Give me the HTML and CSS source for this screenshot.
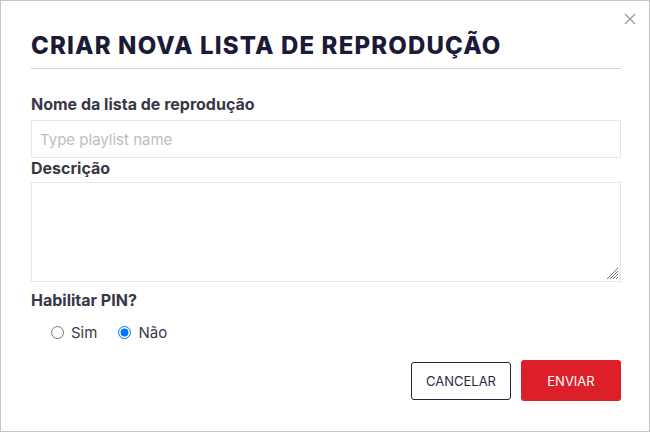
FILE: index.html
```html
<!DOCTYPE html>
<html>
<head>
<meta charset="utf-8">
<link rel="stylesheet" href="styles.css">
</head>
<body>
<div class="modal">
  <button class="close" aria-label="Fechar">
    <svg width="12" height="12" viewBox="0 0 12 12"><path d="M1 1L11 11M11 1L1 11" stroke="#9a9a9a" stroke-width="1.3" fill="none"/></svg>
  </button>
  <h1 class="title">CRIAR NOVA LISTA DE REPRODUÇÃO</h1>
  <div class="form">
    <label class="label" for="name">Nome da lista de reprodução</label>
    <input class="input" id="name" type="text" placeholder="Type playlist name">
    <label class="label label-desc" for="desc">Descrição</label>
    <div class="textarea-wrap">
      <textarea class="textarea" id="desc"></textarea>
      <svg class="grip" width="14" height="14" viewBox="0 0 14 14"><path d="M13 2L2 13M13 5L5 13M13 8L8 13M13 11L11 13" stroke="#7a7a7a" stroke-width="1" fill="none"/></svg>
    </div>
    <div class="label label-pin">Habilitar PIN?</div>
    <div class="radios">
      <label class="radio"><input type="radio" name="pin"> Sim</label>
      <label class="radio"><input type="radio" name="pin" checked> Não</label>
    </div>
    <div class="actions">
      <button class="btn btn-cancel">CANCELAR</button>
      <button class="btn btn-submit">ENVIAR</button>
    </div>
  </div>
</div>
</body>
</html>
```
FILE: styles.css
```css
html, body {
  margin: 0;
  padding: 0;
  background: #ffffff;
}
.modal {
  position: relative;
  width: 650px;
  height: 432px;
  box-sizing: border-box;
  border: 1px solid #c6c6c6;
  padding: 29px 28px 0 30px;
  font-family: Inter, "Liberation Sans", sans-serif;
  background: #fff;
}
.close {
  position: absolute;
  top: 12px;
  right: 13px;
  border: 0;
  background: none;
  padding: 0;
  width: 12px;
  height: 12px;
  display: flex;
}
.title {
  margin: 0;
  font-family: Inter, sans-serif;
  font-weight: 800;
  font-size: 24px;
  line-height: 32px;
  color: #1b1b38;
  letter-spacing: 1.15px;
  padding-bottom: 6px;
  border-bottom: 1px solid #d2d2d2;
}
.form {
  display: flex;
  flex-direction: column;
  padding-top: 25px;
}
.label {
  font-size: 16px;
  font-weight: 700;
  color: #383748;
  line-height: 20px;
  margin-bottom: 6px;
}
.input {
  box-sizing: border-box;
  height: 38px;
  border: 1px solid #e6e6e6;
  padding: 0 8px;
  font-family: Inter, sans-serif;
  font-size: 15px;
  outline: none;
  margin: 0;
}
.input::placeholder {
  color: #bdbdbd;
}
.label-desc {
  margin-top: 0;
  margin-bottom: 4px;
}
.textarea-wrap {
  position: relative;
  display: flex;
}
.textarea {
  flex: 1;
  box-sizing: border-box;
  height: 100px;
  border: 1px solid #e6e6e6;
  margin: 0;
  outline: none;
  resize: none;
}
.grip {
  position: absolute;
  right: 2px;
  bottom: 2px;
}
.label-pin {
  margin-top: 8px;
  margin-bottom: 0;
}
.radios {
  display: flex;
  gap: 21px;
  padding-left: 20px;
  margin-top: 13px;
}
.radio {
  display: flex;
  align-items: center;
  font-size: 15px;
  color: #3a3a4a;
  gap: 7px;
}
.radio input {
  margin: 0;
  width: 13px;
  height: 13px;
}
.actions {
  display: flex;
  justify-content: flex-end;
  align-items: center;
  gap: 10px;
  margin-top: 18px;
}
.btn {
  width: 100px;
  font-family: Inter, sans-serif;
  font-size: 13px;
  border-radius: 3px;
  cursor: pointer;
}
.btn-cancel {
  height: 38px;
  background: #fff;
  border: 1px solid #23233a;
  color: #2b2b40;
}
.btn-submit {
  height: 41px;
  background: #dc1f28;
  border: 0;
  color: #fff;
}
```
